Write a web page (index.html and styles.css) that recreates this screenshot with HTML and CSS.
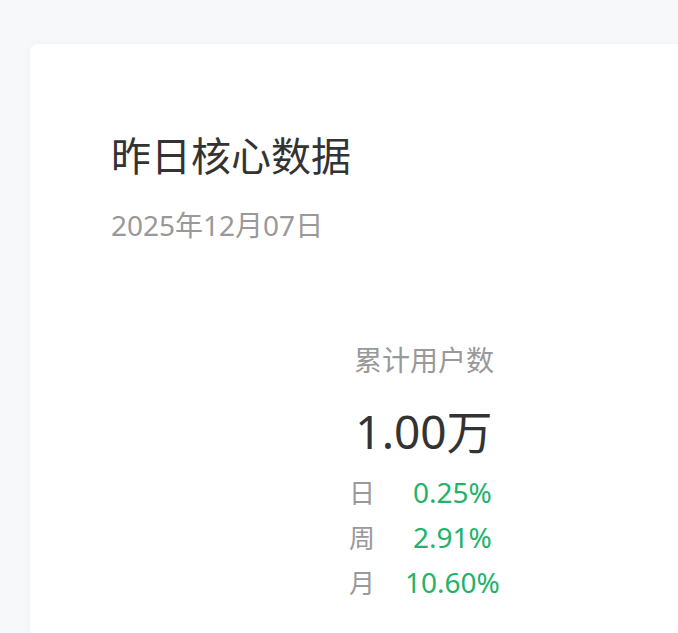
FILE: index.html
```html
<!DOCTYPE html>
<html lang="zh-CN">
<head>
<meta charset="utf-8">
<link rel="stylesheet" href="styles.css">
</head>
<body>
<div class="page">
  <section class="card">
    <h1 class="title">昨日核心数据</h1>
    <div class="date">2025年12月07日</div>
    <div class="stats">
      <div class="stat">
        <div class="stat-label">累计用户数</div>
        <div class="stat-value">1.00万</div>
        <div class="changes">
          <span class="period">日</span><span class="pct">0.25%</span>
          <span class="period">周</span><span class="pct">2.91%</span>
          <span class="period">月</span><span class="pct">10.60%</span>
        </div>
      </div>
    </div>
  </section>
</div>
</body>
</html>
```
FILE: styles.css
```css
html, body {
  margin: 0;
  padding: 0;
  background: #f7f8fa;
  font-family: "Noto Sans", "Noto Sans CJK SC", sans-serif;
  overflow: hidden;
}
.page {
  padding: 44px 0 0 30px;
  height: 633px;
  box-sizing: border-box;
}
.card {
  background: #fff;
  border-radius: 8px 0 0 0;
  box-shadow: 0 0 6px rgba(0, 0, 0, 0.04);
  height: 620px;
  padding: 84px 0 0 81px;
  box-sizing: border-box;
}
.title {
  margin: 0;
  font-weight: 400;
  font-size: 40px;
  line-height: 56px;
  color: #333;
}
.date {
  margin-top: 21px;
  font-size: 28px;
  line-height: 40px;
  color: #999;
}
.stats {
  margin-top: 95px;
  padding-left: 238px;
}
.stat {
  width: 150px;
  display: flex;
  flex-direction: column;
  align-items: center;
}
.stat-label {
  font-size: 28px;
  line-height: 40px;
  color: #999;
}
.stat-value {
  margin-top: 21px;
  font-size: 46px;
  line-height: 60px;
  color: #333;
}
.changes {
  margin-top: 8px;
  width: 150px;
  display: grid;
  grid-template-columns: 24px 1fr;
  grid-auto-rows: 45px;
  align-items: center;
}
.period {
  font-size: 26px;
  color: #999;
  text-align: center;
}
.pct {
  font-size: 28px;
  color: #22b36a;
  text-align: center;
  padding-left: 32px;
}
```
